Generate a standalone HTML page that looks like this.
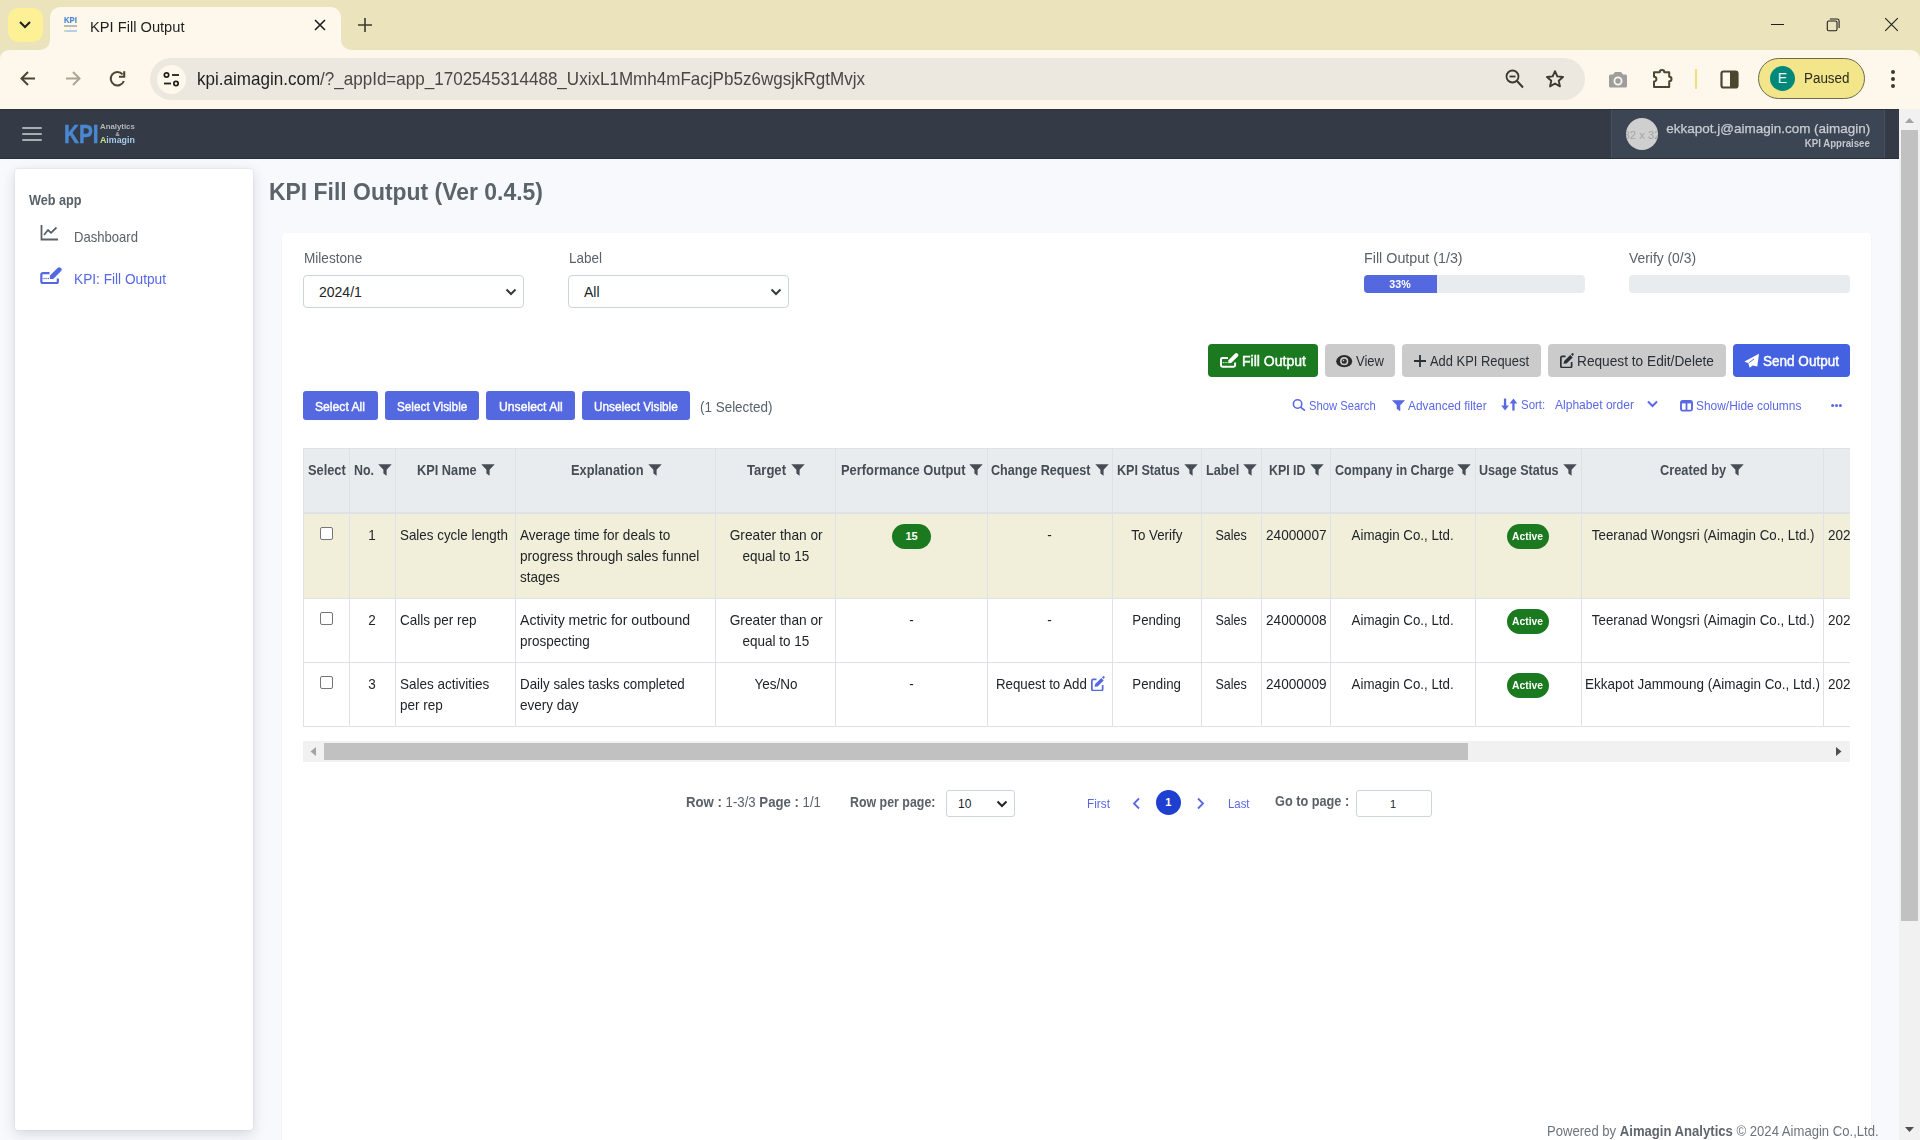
<!DOCTYPE html>
<html><head><meta charset="utf-8"><title>KPI Fill Output</title>
<style>
*{box-sizing:border-box;margin:0;padding:0}
html,body{width:1920px;height:1140px;overflow:hidden}
body{position:relative;font-family:"Liberation Sans",sans-serif;background:#f8f9fd;color:#212529}
.a{position:absolute}
.t{white-space:nowrap}
</style></head><body>
<div class="a" style="left:0px;top:0px;width:1920px;height:60px;background:#eae3bb;"></div>
<div class="a" style="left:0px;top:50px;width:1920px;height:59px;background:#fdf8eb;border-radius:9px 9px 0 0"></div>
<div class="a" style="left:50px;top:7px;width:291px;height:45px;background:#fdf8eb;border-radius:10px 10px 0 0"></div>
<div class="a" style="left:40px;top:40px;width:10px;height:10px;background:#fdf8eb"></div>
<div class="a" style="left:30px;top:30px;width:20px;height:20px;background:#eae3bb;border-radius:0 0 10px 0"></div>
<div class="a" style="left:341px;top:40px;width:10px;height:10px;background:#fdf8eb"></div>
<div class="a" style="left:341px;top:30px;width:20px;height:20px;background:#eae3bb;border-radius:0 0 0 10px"></div>
<div class="a" style="left:8px;top:8px;width:35px;height:34px;background:#fdf095;border-radius:10px"></div>
<svg class="a" style="left:18px;top:19px;" width="14" height="12" viewBox="0 0 14 12"><path d="M2 3 L7 8 L12 3" fill="none" stroke="#1f1f1f" stroke-width="2"/></svg>
<div class="a t" style="left:63.80px;top:14.91px;font-size:9.6px;line-height:10.723px;color:#4a88d2;font-weight:700;font-family:'Liberation Sans';transform:scaleX(0.8000);transform-origin:left top;-webkit-text-stroke:0.2px #4a88d2;">KPI</div>
<div class="a" style="left:64px;top:25.3px;width:12.5px;height:1.4px;background:#bdbab0;"></div>
<div class="a" style="left:69.8px;top:27.8px;width:1.2px;height:1.2px;background:#cfccc2;"></div>
<div class="a" style="left:64px;top:30px;width:12.5px;height:1.5px;background:#b4cfea;"></div>
<div class="a" style="left:64px;top:30px;width:2.4px;height:1.5px;background:#cfe39a;"></div>
<div class="a t" style="left:90.00px;top:17.86px;font-size:15.4px;line-height:17.202px;color:#1f1f1f;font-weight:400;font-family:'Liberation Sans';transform:scaleX(0.9523);transform-origin:left top;">KPI Fill Output</div>
<svg class="a" style="left:314px;top:19px;" width="12" height="12" viewBox="0 0 12 12"><path d="M1 1 L11 11 M11 1 L1 11" stroke="#1f1f1f" stroke-width="1.6"/></svg>
<svg class="a" style="left:358px;top:18px;" width="14" height="14" viewBox="0 0 14 14"><path d="M7 0 V14 M0 7 H14" stroke="#3b3a2e" stroke-width="1.6"/></svg>
<div class="a" style="left:1771px;top:24px;width:13px;height:1px;background:#1f1f1f;"></div>
<svg class="a" style="left:1826px;top:17px;" width="15" height="15" viewBox="0 0 15 15"><rect x="1.3" y="4" width="9.7" height="9.7" rx="1.4" fill="none" stroke="#1f1f1f" stroke-width="1.1"/><path d="M3.8 2 H11.2 Q13.1 2 13.1 3.9 V11" fill="none" stroke="#1f1f1f" stroke-width="1.1"/></svg>
<svg class="a" style="left:1884px;top:17px;" width="15" height="15" viewBox="0 0 15 15"><path d="M1.2 1.2 L13.8 13.8 M13.8 1.2 L1.2 13.8" stroke="#1f1f1f" stroke-width="1.1"/></svg>
<svg class="a" style="left:19px;top:70px;" width="18" height="17" viewBox="0 0 18 17"><path d="M16 8.5 H3 M9 2 L2.5 8.5 L9 15" fill="none" stroke="#4a4630" stroke-width="2"/></svg>
<svg class="a" style="left:64px;top:70px;" width="18" height="17" viewBox="0 0 18 17"><path d="M2 8.5 H15 M9 2 L15.5 8.5 L9 15" fill="none" stroke="#a9a696" stroke-width="2"/></svg>
<svg class="a" style="left:109px;top:70px;" width="18" height="18" viewBox="0 0 18 18"><path d="M14.84 11.0 A6.75 6.75 0 1 1 13.6 4.3" fill="none" stroke="#4a4630" stroke-width="2"/><path d="M15.2 1.2 V6.7 H10" fill="none" stroke="#4a4630" stroke-width="2.1"/></svg>
<div class="a" style="left:150px;top:58px;width:1435px;height:42px;background:#ece8e0;border-radius:21px"></div>
<div class="a" style="left:157px;top:65px;width:29px;height:29px;background:#fdf8eb;border-radius:50%"></div>
<svg class="a" style="left:162px;top:70px;" width="20" height="20" viewBox="0 0 20 20"><circle cx="4.5" cy="5" r="2.2" fill="none" stroke="#1f1f1f" stroke-width="1.7"/><path d="M10 5 H17" stroke="#1f1f1f" stroke-width="1.8"/><path d="M2 13.5 H9" stroke="#1f1f1f" stroke-width="1.8"/><circle cx="14" cy="13.5" r="2.2" fill="none" stroke="#1f1f1f" stroke-width="1.7"/></svg>
<div class="a t" style="left:197.00px;top:69.26px;font-size:18.5px;line-height:20.665px;color:#1f1f1f;font-weight:400;font-family:'Liberation Sans';transform:scaleX(0.9207);transform-origin:left top;">kpi.aimagin.com<span style="color:#4a4740">/?_appId=app_1702545314488_UxixL1Mmh4mFacjPb5z6wgsjkRgtMvjx</span></div>
<svg class="a" style="left:1503px;top:66px;" width="24" height="24" viewBox="0 0 24 24"><circle cx="9.5" cy="10.5" r="6" fill="none" stroke="#3b3a2e" stroke-width="1.8"/><path d="M6.5 10.5 H12.5" stroke="#3b3a2e" stroke-width="1.8"/><path d="M14 15 L20 21.5" stroke="#3b3a2e" stroke-width="2"/></svg>
<svg class="a" style="left:1544px;top:68px;" width="22" height="22" viewBox="0 0 22 22"><path d="M11.00 3.20 L13.32 8.41 L18.99 9.00 L14.75 12.82 L15.94 18.40 L11.00 15.55 L6.06 18.40 L7.25 12.82 L3.01 9.00 L8.68 8.41 Z" fill="none" stroke="#3b3a2e" stroke-width="1.9" stroke-linejoin="round"/></svg>
<svg class="a" style="left:1608px;top:71px;" width="20" height="17" viewBox="0 0 20 17"><path d="M1 5 Q1 3.5 2.5 3.5 H5 L7 1 H13 L15 3.5 H17.5 Q19 3.5 19 5 V15 Q19 16.5 17.5 16.5 H2.5 Q1 16.5 1 15 Z" fill="#9e9e9e"/><circle cx="10" cy="10" r="3.6" fill="none" stroke="#fdf8eb" stroke-width="1.8"/></svg>
<svg class="a" style="left:1652px;top:67px;" width="23" height="22" viewBox="0 0 23 22"><path d="M2 5.2 H7.7 A2.3 2.3 0 0 1 12.3 5.2 H17.2 V9.7 A2.3 2.3 0 0 1 17.2 14.3 V20 H2 V14.6 A2.4 2.4 0 0 0 2 9.8 Z" fill="none" stroke="#4a4630" stroke-width="2" stroke-linejoin="round"/></svg>
<div class="a" style="left:1695px;top:69px;width:2px;height:20px;background:#f0e07a;"></div>
<svg class="a" style="left:1720px;top:70px;" width="20" height="19" viewBox="0 0 20 19"><rect x="1.5" y="1.5" width="16" height="16" rx="2" fill="none" stroke="#4a4630" stroke-width="2.2"/><rect x="10" y="1.5" width="7.5" height="16" fill="#4a4630"/></svg>
<div class="a" style="left:1758px;top:58px;width:107px;height:41px;background:#f2e58a;border:1px solid #6e6a50;border-radius:21px"></div>
<div class="a" style="left:1770px;top:66px;width:25px;height:25px;background:#00897b;border-radius:50%"></div>
<div class="a t" style="left:1777.83px;top:70.83px;font-size:14px;line-height:15.638px;color:#e8f5f3;font-weight:400;font-family:'Liberation Sans';">E</div>
<div class="a t" style="left:1804.00px;top:70.83px;font-size:14px;line-height:15.638px;color:#2b2a1e;font-weight:400;font-family:'Liberation Sans';transform:scaleX(0.9582);transform-origin:left top;">Paused</div>
<svg class="a" style="left:1889px;top:69px;" width="8" height="20" viewBox="0 0 8 20"><circle cx="4" cy="3" r="2" fill="#3b3a2e"/><circle cx="4" cy="10" r="2" fill="#3b3a2e"/><circle cx="4" cy="17" r="2" fill="#3b3a2e"/></svg>
<div class="a" style="left:0px;top:109px;width:1899px;height:50px;background:#343a46;"></div>
<div class="a" style="left:1611px;top:109px;width:274px;height:50px;background:#3c4553;border-left:1px solid #46525f;border-right:1px solid #46525f"></div>
<div class="a" style="left:0px;top:109px;width:1899px;height:1px;background:#2b313b;"></div>
<div class="a" style="left:0px;top:158px;width:1899px;height:1px;background:#2a3039;"></div>
<div class="a" style="left:22px;top:127px;width:20px;height:2px;background:#a9adb3;border-radius:1px"></div>
<div class="a" style="left:22px;top:133px;width:20px;height:2px;background:#a9adb3;border-radius:1px"></div>
<div class="a" style="left:22px;top:139px;width:20px;height:2px;background:#a9adb3;border-radius:1px"></div>
<div class="a t" style="left:63.90px;top:120.68px;font-size:25px;line-height:27.925px;color:#4a88d2;font-weight:700;font-family:'Liberation Sans';transform:scaleX(0.8276);transform-origin:left top;-webkit-text-stroke:0.5px #4a88d2;">KPI</div>
<div class="a t" style="left:100.20px;top:123.46px;font-size:8px;line-height:8.936px;color:#b4b6ba;font-weight:700;font-family:'Liberation Sans';transform:scaleX(0.9781);transform-origin:left top;filter:blur(0.25px);">Analytics</div>
<div class="a t" style="left:115.51px;top:131.32px;font-size:5.5px;line-height:6.143px;color:#b4b6ba;font-weight:700;font-family:'Liberation Sans';">&amp;</div>
<div class="a t" style="left:100.20px;top:135.16px;font-size:9px;line-height:10.053px;color:#a6cbec;font-weight:700;font-family:'Liberation Sans';transform:scaleX(0.9799);transform-origin:left top;filter:blur(0.25px);"><span style="color:#c9e27a">A</span>imagin</div>
<div class="a" style="left:1626px;top:118px;width:32px;height:32px;background:#cfcfcf;border-radius:50%"></div>
<div class="a" style="left:1626px;top:118px;width:32px;height:32px;border-radius:50%;overflow:hidden">
<div class="a t" style="left:-2.05px;top:11.24px;font-size:11px;line-height:12.287px;color:#a4a4a4;font-weight:400;font-family:'Liberation Sans';transform:scaleX(1.0251);transform-origin:center top;">32 x 32</div>
</div>
<div class="a t" style="left:1665.70px;top:120.78px;font-size:13.5px;line-height:15.079px;color:#c9cdd3;font-weight:400;font-family:'Liberation Sans';transform:scaleX(0.9985);transform-origin:right top;-webkit-text-stroke:0.25px #c9cdd3;">ekkapot.j@aimagin.com (aimagin)</div>
<div class="a t" style="left:1797.19px;top:137.23px;font-size:10.8px;line-height:12.064px;color:#c4c8ce;font-weight:700;font-family:'Liberation Sans';transform:scaleX(0.8927);transform-origin:right top;">KPI Appraisee</div>
<div class="a" style="left:1899px;top:109px;width:21px;height:1031px;background:#f1f1f1;"></div>
<svg class="a" style="left:1904px;top:117px;" width="11" height="7" viewBox="0 0 11 7"><path d="M1 6 L5.5 1 L10 6 Z" fill="#a3a3a3"/></svg>
<div class="a" style="left:1901px;top:130px;width:17px;height:791px;background:#c1c1c1;"></div>
<svg class="a" style="left:1904px;top:1126px;" width="11" height="7" viewBox="0 0 11 7"><path d="M1 1 L5.5 6 L10 1 Z" fill="#505050"/></svg>
<div class="a" style="left:15px;top:169px;width:238px;height:961px;background:#fff;border-radius:3px;box-shadow:0 4px 14px rgba(20,30,50,.15),0 0 2px rgba(0,0,0,.13)"></div>
<div class="a t" style="left:29.00px;top:192.83px;font-size:14px;line-height:15.638px;color:#5a6169;font-weight:700;font-family:'Liberation Sans';transform:scaleX(0.9057);transform-origin:left top;">Web app</div>
<svg class="a" style="left:40px;top:224px;" width="19" height="17" viewBox="0 0 19 17"><path d="M1.5 1 V15.5 H18" fill="none" stroke="#5a6169" stroke-width="1.8"/><path d="M4 11 L8 6 L11 8.8 L16.5 3.5" fill="none" stroke="#5a6169" stroke-width="1.8" stroke-linejoin="round"/></svg>
<div class="a t" style="left:74.00px;top:228.99px;font-size:14.6px;line-height:16.308px;color:#5a6169;font-weight:400;font-family:'Liberation Sans';transform:scaleX(0.8963);transform-origin:left top;">Dashboard</div>
<svg class="a" style="left:38.629999999999995px;top:265.54999999999995px;" width="23.4" height="18.72" viewBox="-1 -5 20 16"><path d="M8 1 H2.4 Q1 1 1 2.4 V8.3 Q1 9.7 2.4 9.7 H13.7 Q15.1 9.7 15.1 8.3 V5.6" fill="none" stroke="#5468e0" stroke-width="1.9"/><path d="M8.39 3.19 L14.89 -3.31 Q16.3 -4.7 17.71 -3.31 Q19.1 -1.9 17.71 -0.49 L11.21 6.01 L8.24 6.16 Z" fill="#5468e0"/><circle cx="3.3" cy="5.6" r="0.65" fill="#5468e0"/><circle cx="5.1" cy="5.6" r="0.65" fill="#5468e0"/><circle cx="6.9" cy="5.6" r="0.65" fill="#5468e0"/></svg>
<div class="a t" style="left:74.00px;top:271.51px;font-size:13.8px;line-height:15.415px;color:#5468e6;font-weight:400;font-family:'Liberation Sans';transform:scaleX(0.9916);transform-origin:left top;">KPI: Fill Output</div>
<div class="a t" style="left:269.00px;top:179.69px;font-size:23px;line-height:25.691px;color:#5b636b;font-weight:700;font-family:'Liberation Sans';transform:scaleX(0.9972);transform-origin:left top;">KPI Fill Output (Ver 0.4.5)</div>
<div class="a" style="left:282px;top:233px;width:1589px;height:930px;background:#fff;border-radius:4px;box-shadow:0 1px 3px rgba(30,40,60,.05)"></div>
<div class="a t" style="left:303.70px;top:250.18px;font-size:14.5px;line-height:16.197px;color:#5a6169;font-weight:400;font-family:'Liberation Sans';transform:scaleX(0.9378);transform-origin:left top;">Milestone</div>
<div class="a t" style="left:568.50px;top:250.18px;font-size:14.5px;line-height:16.197px;color:#5a6169;font-weight:400;font-family:'Liberation Sans';transform:scaleX(0.9300);transform-origin:left top;">Label</div>
<div class="a" style="left:303px;top:275px;width:221px;height:33px;background:#fff;border:1px solid #ced4da;border-radius:4px"></div>
<div class="a t" style="left:319.00px;top:285.43px;font-size:14px;line-height:15.638px;color:#212529;font-weight:400;font-family:'Liberation Sans';">2024/1</div>
<svg class="a" style="left:505px;top:288px;" width="12" height="8" viewBox="0 0 12 8"><path d="M1.5 1.5 L6 6 L10.5 1.5" fill="none" stroke="#343a40" stroke-width="2"/></svg>
<div class="a" style="left:568px;top:275px;width:221px;height:33px;background:#fff;border:1px solid #ced4da;border-radius:4px"></div>
<div class="a t" style="left:584.00px;top:285.43px;font-size:14px;line-height:15.638px;color:#212529;font-weight:400;font-family:'Liberation Sans';">All</div>
<svg class="a" style="left:770px;top:288px;" width="12" height="8" viewBox="0 0 12 8"><path d="M1.5 1.5 L6 6 L10.5 1.5" fill="none" stroke="#343a40" stroke-width="2"/></svg>
<div class="a t" style="left:1364.20px;top:250.18px;font-size:14.5px;line-height:16.197px;color:#5a6169;font-weight:400;font-family:'Liberation Sans';transform:scaleX(0.9868);transform-origin:left top;">Fill Output (1/3)</div>
<div class="a t" style="left:1629.20px;top:250.18px;font-size:14.5px;line-height:16.197px;color:#5a6169;font-weight:400;font-family:'Liberation Sans';transform:scaleX(0.9556);transform-origin:left top;">Verify (0/3)</div>
<div class="a" style="left:1364px;top:275px;width:221px;height:18px;background:#e9ecef;border-radius:4px"></div>
<div class="a" style="left:1364px;top:275px;width:73px;height:18px;background:#5468e0;border-radius:4px 0 0 4px"></div>
<div class="a t" style="left:1389.38px;top:278.25px;font-size:11px;line-height:12.287px;color:#fff;font-weight:700;font-family:'Liberation Sans';transform:scaleX(0.9713);transform-origin:center top;">33%</div>
<div class="a" style="left:1629px;top:275px;width:221px;height:18px;background:#e9ecef;border-radius:4px"></div>
<div class="a" style="left:1208px;top:344px;width:110px;height:33px;background:#1b7a1f;border-radius:4px"></div>
<svg class="a" style="left:1218.6px;top:352px;" width="20.0" height="16.0" viewBox="-1 -5 20 16"><path d="M8 1 H2.4 Q1 1 1 2.4 V8.3 Q1 9.7 2.4 9.7 H13.7 Q15.1 9.7 15.1 8.3 V5.6" fill="none" stroke="#fff" stroke-width="2"/><path d="M8.39 3.19 L14.89 -3.31 Q16.3 -4.7 17.71 -3.31 Q19.1 -1.9 17.71 -0.49 L11.21 6.01 L8.24 6.16 Z" fill="#fff"/><circle cx="3.3" cy="5.6" r="0.65" fill="#fff"/><circle cx="5.1" cy="5.6" r="0.65" fill="#fff"/><circle cx="6.9" cy="5.6" r="0.65" fill="#fff"/></svg>
<div class="a t" style="left:1241.60px;top:353.08px;font-size:14.5px;line-height:16.197px;color:#fff;font-weight:400;font-family:'Liberation Sans';transform:scaleX(0.9683);transform-origin:left top;-webkit-text-stroke:0.45px #fff;">Fill Output</div>
<div class="a" style="left:1325px;top:344px;width:70px;height:33px;background:#cbcbcb;border-radius:4px"></div>
<svg class="a" style="left:1336px;top:354.5px;" width="17" height="13" viewBox="0 0 17 13"><ellipse cx="8.2" cy="6.2" rx="8" ry="6.1" fill="#2b2b2b"/><circle cx="8.2" cy="6.2" r="4.1" fill="#cbcbcb"/><circle cx="8.2" cy="6.2" r="2.5" fill="#2b2b2b"/><path d="M8.2 4.6 A1.6 1.6 0 0 0 6.6 6.2 L8.2 6.2 Z" fill="#cbcbcb"/></svg>
<div class="a t" style="left:1355.80px;top:353.73px;font-size:14px;line-height:15.638px;color:#2a2f35;font-weight:400;font-family:'Liberation Sans';transform:scaleX(0.9304);transform-origin:left top;">View</div>
<div class="a" style="left:1402px;top:344px;width:139px;height:33px;background:#cbcbcb;border-radius:4px"></div>
<svg class="a" style="left:1413px;top:354px;" width="14" height="14" viewBox="0 0 14 14"><path d="M7 1 V13 M1 7 H13" stroke="#2a2f35" stroke-width="1.8"/></svg>
<div class="a t" style="left:1430.00px;top:353.73px;font-size:14px;line-height:15.638px;color:#2a2f35;font-weight:400;font-family:'Liberation Sans';transform:scaleX(0.9217);transform-origin:left top;">Add KPI Request</div>
<div class="a" style="left:1548px;top:344px;width:178px;height:33px;background:#cbcbcb;border-radius:4px"></div>
<svg class="a" style="left:1558.5px;top:352.0px;" width="16.0" height="16.0" viewBox="-1 -3.5 16 16"><path d="M5.5 0.85 H2.3 Q0.85 0.85 0.85 2.3 V10.6 Q0.85 12.05 2.3 12.05 H10.2 Q11.65 12.05 11.65 10.6 V6.5" fill="none" stroke="#2a2f35" stroke-width="1.7"/><path d="M3.5 8.3 L4.2 5.6 L10.3 -0.5 L12.7 1.9 L6.6 8 Z" fill="#2a2f35"/><path d="M11 -1.2 L11.8 -2 Q12.6 -2.8 13.4 -2 Q14.2 -1.2 13.4 -0.4 L13.4 -0.4 L12.6 0.4 Z" fill="#2a2f35"/></svg>
<div class="a t" style="left:1577.00px;top:353.73px;font-size:14px;line-height:15.638px;color:#2a2f35;font-weight:400;font-family:'Liberation Sans';transform:scaleX(0.9779);transform-origin:left top;">Request to Edit/Delete</div>
<div class="a" style="left:1733px;top:344px;width:117px;height:33px;background:#4361e0;border-radius:4px"></div>
<svg class="a" style="left:1744px;top:353px;" width="16" height="16" viewBox="0 0 16 16"><path d="M15 0.7 L0.4 8.5 L4.3 10.2 L5.7 14.8 L8.6 12.5 L13.3 13.5 Z" fill="#fff"/><path d="M4.6 10 L10 6" stroke="#4361e0" stroke-width="0.9"/></svg>
<div class="a t" style="left:1762.50px;top:353.08px;font-size:14.5px;line-height:16.197px;color:#fff;font-weight:400;font-family:'Liberation Sans';transform:scaleX(0.9334);transform-origin:left top;-webkit-text-stroke:0.45px #fff;">Send Output</div>
<div class="a" style="left:303px;top:391px;width:75px;height:29px;background:#5468e0;border-radius:3px"></div>
<div class="a t" style="left:315.40px;top:399.62px;font-size:12.8px;line-height:14.298px;color:#fff;font-weight:400;font-family:'Liberation Sans';transform:scaleX(0.9498);transform-origin:left top;-webkit-text-stroke:0.4px #fff;">Select All</div>
<div class="a" style="left:385px;top:391px;width:94px;height:29px;background:#5468e0;border-radius:3px"></div>
<div class="a t" style="left:397.00px;top:399.62px;font-size:12.8px;line-height:14.298px;color:#fff;font-weight:400;font-family:'Liberation Sans';transform:scaleX(0.9178);transform-origin:left top;-webkit-text-stroke:0.4px #fff;">Select Visible</div>
<div class="a" style="left:486px;top:391px;width:89px;height:29px;background:#5468e0;border-radius:3px"></div>
<div class="a t" style="left:498.70px;top:399.62px;font-size:12.8px;line-height:14.298px;color:#fff;font-weight:400;font-family:'Liberation Sans';transform:scaleX(0.9542);transform-origin:left top;-webkit-text-stroke:0.4px #fff;">Unselect All</div>
<div class="a" style="left:582px;top:391px;width:108px;height:29px;background:#5468e0;border-radius:3px"></div>
<div class="a t" style="left:594.00px;top:399.62px;font-size:12.8px;line-height:14.298px;color:#fff;font-weight:400;font-family:'Liberation Sans';transform:scaleX(0.9228);transform-origin:left top;-webkit-text-stroke:0.4px #fff;">Unselect Visible</div>
<div class="a t" style="left:700.30px;top:399.38px;font-size:14.5px;line-height:16.197px;color:#5a6169;font-weight:400;font-family:'Liberation Sans';transform:scaleX(0.9273);transform-origin:left top;">(1 Selected)</div>
<svg class="a" style="left:1292px;top:399.3px;" width="14" height="13" viewBox="0 0 14 13"><circle cx="5.6" cy="5" r="4.2" fill="none" stroke="#5b68e6" stroke-width="1.6"/><path d="M8.6 8.2 L13 11.6" stroke="#5b68e6" stroke-width="1.7"/></svg>
<div class="a t" style="left:1308.70px;top:398.54px;font-size:13px;line-height:14.521px;color:#5b68e6;font-weight:400;font-family:'Liberation Sans';transform:scaleX(0.8626);transform-origin:left top;">Show Search</div>
<svg class="a" style="left:1391.5px;top:400px;" width="13" height="11" viewBox="0 0 13 11"><path d="M0.5 0.5 H12.5 L8 5.3 V10.7 L5 8.8 V5.3 Z" fill="#5b68e6" stroke="#5b68e6" stroke-width="0.6" stroke-linejoin="round"/></svg>
<div class="a t" style="left:1408.00px;top:398.54px;font-size:13px;line-height:14.521px;color:#5b68e6;font-weight:400;font-family:'Liberation Sans';transform:scaleX(0.9151);transform-origin:left top;">Advanced filter</div>
<svg class="a" style="left:1501px;top:398px;" width="17" height="13" viewBox="0 0 17 13"><rect x="2.9" y="0.6" width="2.3" height="8" fill="#5b68e6"/><path d="M0.2 7.6 H7.9 L4.05 12.6 Z" fill="#5b68e6"/><rect x="11.3" y="4.4" width="2.3" height="8.2" fill="#5b68e6"/><path d="M8.6 5.4 H16.3 L12.45 0.6 Z" fill="#5b68e6"/></svg>
<div class="a t" style="left:1520.80px;top:397.94px;font-size:13px;line-height:14.521px;color:#5b68e6;font-weight:400;font-family:'Liberation Sans';transform:scaleX(0.8810);transform-origin:left top;">Sort:</div>
<div class="a t" style="left:1555.30px;top:397.94px;font-size:13px;line-height:14.521px;color:#5b68e6;font-weight:400;font-family:'Liberation Sans';transform:scaleX(0.9263);transform-origin:left top;">Alphabet order</div>
<svg class="a" style="left:1647px;top:400px;" width="11" height="8" viewBox="0 0 11 8"><path d="M1 1.5 L5.5 6 L10 1.5" fill="none" stroke="#5b68e6" stroke-width="2"/></svg>
<svg class="a" style="left:1680px;top:400px;" width="13" height="11.5" viewBox="0 0 13 11.5"><rect x="1" y="1" width="11" height="9.6" rx="1.5" fill="none" stroke="#5b68e6" stroke-width="1.9"/><rect x="1" y="1" width="11" height="2.4" fill="#5b68e6"/><path d="M6.5 1 V11" stroke="#5b68e6" stroke-width="1.8"/></svg>
<div class="a t" style="left:1695.80px;top:398.54px;font-size:13px;line-height:14.521px;color:#5b68e6;font-weight:400;font-family:'Liberation Sans';transform:scaleX(0.9174);transform-origin:left top;">Show/Hide columns</div>
<svg class="a" style="left:1831px;top:403px;" width="11" height="5" viewBox="0 0 11 5"><circle cx="1.6" cy="2.5" r="1.5" fill="#5b68e6"/><circle cx="5.5" cy="2.5" r="1.5" fill="#5b68e6"/><circle cx="9.4" cy="2.5" r="1.5" fill="#5b68e6"/></svg>
<div class="a" style="left:303px;top:448px;width:1547px;height:64px;background:#e9ecef;"></div>
<div class="a" style="left:303px;top:514px;width:1547px;height:84px;background:#f1efda;"></div>
<div class="a" style="left:303px;top:599px;width:1547px;height:63px;background:#fff;"></div>
<div class="a" style="left:303px;top:663px;width:1547px;height:63px;background:#fff;"></div>
<div class="a" style="left:303px;top:448px;width:1547px;height:1px;background:#dee2e6;"></div>
<div class="a" style="left:303px;top:512px;width:1547px;height:2px;background:#dee2e6;"></div>
<div class="a" style="left:303px;top:598px;width:1547px;height:1px;background:#dee2e6;"></div>
<div class="a" style="left:303px;top:662px;width:1547px;height:1px;background:#dee2e6;"></div>
<div class="a" style="left:303px;top:726px;width:1547px;height:1px;background:#dee2e6;"></div>
<div class="a" style="left:303px;top:448px;width:1px;height:279px;background:#dee2e6;"></div>
<div class="a" style="left:349px;top:448px;width:1px;height:279px;background:#dee2e6;"></div>
<div class="a" style="left:395px;top:448px;width:1px;height:279px;background:#dee2e6;"></div>
<div class="a" style="left:515px;top:448px;width:1px;height:279px;background:#dee2e6;"></div>
<div class="a" style="left:715px;top:448px;width:1px;height:279px;background:#dee2e6;"></div>
<div class="a" style="left:835px;top:448px;width:1px;height:279px;background:#dee2e6;"></div>
<div class="a" style="left:987px;top:448px;width:1px;height:279px;background:#dee2e6;"></div>
<div class="a" style="left:1112px;top:448px;width:1px;height:279px;background:#dee2e6;"></div>
<div class="a" style="left:1201px;top:448px;width:1px;height:279px;background:#dee2e6;"></div>
<div class="a" style="left:1261px;top:448px;width:1px;height:279px;background:#dee2e6;"></div>
<div class="a" style="left:1330px;top:448px;width:1px;height:279px;background:#dee2e6;"></div>
<div class="a" style="left:1475px;top:448px;width:1px;height:279px;background:#dee2e6;"></div>
<div class="a" style="left:1581px;top:448px;width:1px;height:279px;background:#dee2e6;"></div>
<div class="a" style="left:1823px;top:448px;width:1px;height:279px;background:#dee2e6;"></div>
<div class="a t" style="left:307.75px;top:462.83px;font-size:14px;line-height:15.638px;color:#464d55;font-weight:700;font-family:'Liberation Sans';transform:scaleX(0.9152);transform-origin:left top;">Select</div>
<div class="a t" style="left:354.00px;top:462.83px;font-size:14px;line-height:15.638px;color:#464d55;font-weight:700;font-family:'Liberation Sans';transform:scaleX(0.8864);transform-origin:left top;">No.</div>
<svg class="a" style="left:378px;top:464px;" width="14" height="12" viewBox="0 0 14 12"><path d="M0.3 0.3 H13.7 L8.6 5.8 V11.7 L5.4 9.4 V5.8 Z" fill="#464d55"/></svg>
<div class="a t" style="left:417.40px;top:462.83px;font-size:14px;line-height:15.638px;color:#464d55;font-weight:700;font-family:'Liberation Sans';transform:scaleX(0.9119);transform-origin:left top;">KPI Name</div>
<svg class="a" style="left:481px;top:464px;" width="14" height="12" viewBox="0 0 14 12"><path d="M0.3 0.3 H13.7 L8.6 5.8 V11.7 L5.4 9.4 V5.8 Z" fill="#464d55"/></svg>
<div class="a t" style="left:570.70px;top:462.83px;font-size:14px;line-height:15.638px;color:#464d55;font-weight:700;font-family:'Liberation Sans';transform:scaleX(0.9136);transform-origin:left top;">Explanation</div>
<svg class="a" style="left:648px;top:464px;" width="14" height="12" viewBox="0 0 14 12"><path d="M0.3 0.3 H13.7 L8.6 5.8 V11.7 L5.4 9.4 V5.8 Z" fill="#464d55"/></svg>
<div class="a t" style="left:747.40px;top:462.83px;font-size:14px;line-height:15.638px;color:#464d55;font-weight:700;font-family:'Liberation Sans';transform:scaleX(0.9341);transform-origin:left top;">Target</div>
<svg class="a" style="left:791px;top:464px;" width="14" height="12" viewBox="0 0 14 12"><path d="M0.3 0.3 H13.7 L8.6 5.8 V11.7 L5.4 9.4 V5.8 Z" fill="#464d55"/></svg>
<div class="a t" style="left:840.50px;top:462.83px;font-size:14px;line-height:15.638px;color:#464d55;font-weight:700;font-family:'Liberation Sans';transform:scaleX(0.9198);transform-origin:left top;">Performance Output</div>
<svg class="a" style="left:969.4px;top:464px;" width="14" height="12" viewBox="0 0 14 12"><path d="M0.3 0.3 H13.7 L8.6 5.8 V11.7 L5.4 9.4 V5.8 Z" fill="#464d55"/></svg>
<div class="a t" style="left:991.25px;top:462.83px;font-size:14px;line-height:15.638px;color:#464d55;font-weight:700;font-family:'Liberation Sans';transform:scaleX(0.8993);transform-origin:left top;">Change Request</div>
<svg class="a" style="left:1094.8px;top:464px;" width="14" height="12" viewBox="0 0 14 12"><path d="M0.3 0.3 H13.7 L8.6 5.8 V11.7 L5.4 9.4 V5.8 Z" fill="#464d55"/></svg>
<div class="a t" style="left:1116.90px;top:462.83px;font-size:14px;line-height:15.638px;color:#464d55;font-weight:700;font-family:'Liberation Sans';transform:scaleX(0.8969);transform-origin:left top;">KPI Status</div>
<svg class="a" style="left:1184px;top:464px;" width="14" height="12" viewBox="0 0 14 12"><path d="M0.3 0.3 H13.7 L8.6 5.8 V11.7 L5.4 9.4 V5.8 Z" fill="#464d55"/></svg>
<div class="a t" style="left:1206.00px;top:462.83px;font-size:14px;line-height:15.638px;color:#464d55;font-weight:700;font-family:'Liberation Sans';transform:scaleX(0.9104);transform-origin:left top;">Label</div>
<svg class="a" style="left:1243.4px;top:464px;" width="14" height="12" viewBox="0 0 14 12"><path d="M0.3 0.3 H13.7 L8.6 5.8 V11.7 L5.4 9.4 V5.8 Z" fill="#464d55"/></svg>
<div class="a t" style="left:1268.80px;top:462.83px;font-size:14px;line-height:15.638px;color:#464d55;font-weight:700;font-family:'Liberation Sans';transform:scaleX(0.8852);transform-origin:left top;">KPI ID</div>
<svg class="a" style="left:1309.6px;top:464px;" width="14" height="12" viewBox="0 0 14 12"><path d="M0.3 0.3 H13.7 L8.6 5.8 V11.7 L5.4 9.4 V5.8 Z" fill="#464d55"/></svg>
<div class="a t" style="left:1334.60px;top:462.83px;font-size:14px;line-height:15.638px;color:#464d55;font-weight:700;font-family:'Liberation Sans';transform:scaleX(0.8998);transform-origin:left top;">Company in Charge</div>
<svg class="a" style="left:1457.3px;top:464px;" width="14" height="12" viewBox="0 0 14 12"><path d="M0.3 0.3 H13.7 L8.6 5.8 V11.7 L5.4 9.4 V5.8 Z" fill="#464d55"/></svg>
<div class="a t" style="left:1479.40px;top:462.83px;font-size:14px;line-height:15.638px;color:#464d55;font-weight:700;font-family:'Liberation Sans';transform:scaleX(0.8974);transform-origin:left top;">Usage Status</div>
<svg class="a" style="left:1563px;top:464px;" width="14" height="12" viewBox="0 0 14 12"><path d="M0.3 0.3 H13.7 L8.6 5.8 V11.7 L5.4 9.4 V5.8 Z" fill="#464d55"/></svg>
<div class="a t" style="left:1660.30px;top:462.83px;font-size:14px;line-height:15.638px;color:#464d55;font-weight:700;font-family:'Liberation Sans';transform:scaleX(0.9135);transform-origin:left top;">Created by</div>
<svg class="a" style="left:1730px;top:464px;" width="14" height="12" viewBox="0 0 14 12"><path d="M0.3 0.3 H13.7 L8.6 5.8 V11.7 L5.4 9.4 V5.8 Z" fill="#464d55"/></svg>
<div class="a" style="left:320px;top:527.2px;width:13px;height:13px;background:#fff;border:1px solid #767676;border-radius:2px"></div>
<div class="a t" style="left:368.46px;top:527.38px;font-size:14.5px;line-height:16.197px;color:#212529;font-weight:400;font-family:'Liberation Sans';transform:scaleX(0.9310);transform-origin:center top;">1</div>
<div class="a" style="left:320px;top:611.7px;width:13px;height:13px;background:#fff;border:1px solid #767676;border-radius:2px"></div>
<div class="a t" style="left:368.46px;top:611.88px;font-size:14.5px;line-height:16.197px;color:#212529;font-weight:400;font-family:'Liberation Sans';transform:scaleX(0.9310);transform-origin:center top;">2</div>
<div class="a" style="left:320px;top:675.7px;width:13px;height:13px;background:#fff;border:1px solid #767676;border-radius:2px"></div>
<div class="a t" style="left:368.46px;top:675.88px;font-size:14.5px;line-height:16.197px;color:#212529;font-weight:400;font-family:'Liberation Sans';transform:scaleX(0.9310);transform-origin:center top;">3</div>
<div class="a t" style="left:400.20px;top:527.38px;font-size:14.5px;line-height:16.197px;color:#212529;font-weight:400;font-family:'Liberation Sans';transform:scaleX(0.9232);transform-origin:left top;">Sales cycle length</div>
<div class="a t" style="left:400.20px;top:611.88px;font-size:14.5px;line-height:16.197px;color:#212529;font-weight:400;font-family:'Liberation Sans';transform:scaleX(0.9310);transform-origin:left top;">Calls per rep</div>
<div class="a t" style="left:400.20px;top:675.88px;font-size:14.5px;line-height:16.197px;color:#212529;font-weight:400;font-family:'Liberation Sans';transform:scaleX(0.9310);transform-origin:left top;">Sales activities</div>
<div class="a t" style="left:400.20px;top:696.88px;font-size:14.5px;line-height:16.197px;color:#212529;font-weight:400;font-family:'Liberation Sans';transform:scaleX(0.9310);transform-origin:left top;">per rep</div>
<div class="a t" style="left:520.20px;top:527.38px;font-size:14.5px;line-height:16.197px;color:#212529;font-weight:400;font-family:'Liberation Sans';transform:scaleX(0.9339);transform-origin:left top;">Average time for deals to</div>
<div class="a t" style="left:520.20px;top:548.38px;font-size:14.5px;line-height:16.197px;color:#212529;font-weight:400;font-family:'Liberation Sans';transform:scaleX(0.9385);transform-origin:left top;">progress through sales funnel</div>
<div class="a t" style="left:520.20px;top:569.38px;font-size:14.5px;line-height:16.197px;color:#212529;font-weight:400;font-family:'Liberation Sans';transform:scaleX(0.9310);transform-origin:left top;">stages</div>
<div class="a t" style="left:520.20px;top:611.88px;font-size:14.5px;line-height:16.197px;color:#212529;font-weight:400;font-family:'Liberation Sans';transform:scaleX(0.9732);transform-origin:left top;">Activity metric for outbound</div>
<div class="a t" style="left:520.20px;top:632.88px;font-size:14.5px;line-height:16.197px;color:#212529;font-weight:400;font-family:'Liberation Sans';transform:scaleX(0.9310);transform-origin:left top;">prospecting</div>
<div class="a t" style="left:520.20px;top:675.88px;font-size:14.5px;line-height:16.197px;color:#212529;font-weight:400;font-family:'Liberation Sans';transform:scaleX(0.9211);transform-origin:left top;">Daily sales tasks completed</div>
<div class="a t" style="left:520.20px;top:696.88px;font-size:14.5px;line-height:16.197px;color:#212529;font-weight:400;font-family:'Liberation Sans';transform:scaleX(0.9310);transform-origin:left top;">every day</div>
<div class="a t" style="left:726.64px;top:527.38px;font-size:14.5px;line-height:16.197px;color:#212529;font-weight:400;font-family:'Liberation Sans';transform:scaleX(0.9458);transform-origin:center top;">Greater than or</div>
<div class="a t" style="left:739.92px;top:548.38px;font-size:14.5px;line-height:16.197px;color:#212529;font-weight:400;font-family:'Liberation Sans';transform:scaleX(0.9310);transform-origin:center top;">equal to 15</div>
<div class="a t" style="left:726.64px;top:611.88px;font-size:14.5px;line-height:16.197px;color:#212529;font-weight:400;font-family:'Liberation Sans';transform:scaleX(0.9458);transform-origin:center top;">Greater than or</div>
<div class="a t" style="left:739.92px;top:632.88px;font-size:14.5px;line-height:16.197px;color:#212529;font-weight:400;font-family:'Liberation Sans';transform:scaleX(0.9310);transform-origin:center top;">equal to 15</div>
<div class="a t" style="left:752.69px;top:675.88px;font-size:14.5px;line-height:16.197px;color:#212529;font-weight:400;font-family:'Liberation Sans';transform:scaleX(0.9310);transform-origin:center top;">Yes/No</div>
<div class="a" style="left:892px;top:524px;width:39px;height:25px;background:#1b7a1f;border-radius:12.5px"></div>
<div class="a t" style="left:905.38px;top:530.25px;font-size:11px;line-height:12.287px;color:#fff;font-weight:700;font-family:'Liberation Sans';">15</div>
<div class="a t" style="left:909.08px;top:611.88px;font-size:14.5px;line-height:16.197px;color:#212529;font-weight:400;font-family:'Liberation Sans';transform:scaleX(0.9310);transform-origin:center top;">-</div>
<div class="a t" style="left:909.08px;top:675.88px;font-size:14.5px;line-height:16.197px;color:#212529;font-weight:400;font-family:'Liberation Sans';transform:scaleX(0.9310);transform-origin:center top;">-</div>
<div class="a t" style="left:1047.08px;top:527.38px;font-size:14.5px;line-height:16.197px;color:#212529;font-weight:400;font-family:'Liberation Sans';transform:scaleX(0.9310);transform-origin:center top;">-</div>
<div class="a t" style="left:1047.08px;top:611.88px;font-size:14.5px;line-height:16.197px;color:#212529;font-weight:400;font-family:'Liberation Sans';transform:scaleX(0.9310);transform-origin:center top;">-</div>
<div class="a t" style="left:995.60px;top:675.88px;font-size:14.5px;line-height:16.197px;color:#212529;font-weight:400;font-family:'Liberation Sans';transform:scaleX(0.9156);transform-origin:left top;">Request to Add</div>
<svg class="a" style="left:1089.5px;top:674.8px;" width="16.0" height="16.0" viewBox="-1 -3.5 16 16"><path d="M5.5 0.85 H2.3 Q0.85 0.85 0.85 2.3 V10.6 Q0.85 12.05 2.3 12.05 H10.2 Q11.65 12.05 11.65 10.6 V6.5" fill="none" stroke="#5468e0" stroke-width="1.7"/><path d="M3.5 8.3 L4.2 5.6 L10.3 -0.5 L12.7 1.9 L6.6 8 Z" fill="#5468e0"/><path d="M11 -1.2 L11.8 -2 Q12.6 -2.8 13.4 -2 Q14.2 -1.2 13.4 -0.4 L13.4 -0.4 L12.6 0.4 Z" fill="#5468e0"/></svg>
<div class="a t" style="left:1129.20px;top:527.38px;font-size:14.5px;line-height:16.197px;color:#212529;font-weight:400;font-family:'Liberation Sans';transform:scaleX(0.9207);transform-origin:center top;">To Verify</div>
<div class="a t" style="left:1130.39px;top:611.88px;font-size:14.5px;line-height:16.197px;color:#212529;font-weight:400;font-family:'Liberation Sans';transform:scaleX(0.9132);transform-origin:center top;">Pending</div>
<div class="a t" style="left:1130.39px;top:675.88px;font-size:14.5px;line-height:16.197px;color:#212529;font-weight:400;font-family:'Liberation Sans';transform:scaleX(0.9132);transform-origin:center top;">Pending</div>
<div class="a t" style="left:1213.16px;top:527.38px;font-size:14.5px;line-height:16.197px;color:#212529;font-weight:400;font-family:'Liberation Sans';transform:scaleX(0.8627);transform-origin:center top;">Sales</div>
<div class="a t" style="left:1213.16px;top:611.88px;font-size:14.5px;line-height:16.197px;color:#212529;font-weight:400;font-family:'Liberation Sans';transform:scaleX(0.8627);transform-origin:center top;">Sales</div>
<div class="a t" style="left:1213.16px;top:675.88px;font-size:14.5px;line-height:16.197px;color:#212529;font-weight:400;font-family:'Liberation Sans';transform:scaleX(0.8627);transform-origin:center top;">Sales</div>
<div class="a t" style="left:1263.54px;top:527.38px;font-size:14.5px;line-height:16.197px;color:#212529;font-weight:400;font-family:'Liberation Sans';transform:scaleX(0.9378);transform-origin:center top;">24000007</div>
<div class="a t" style="left:1347.38px;top:527.38px;font-size:14.5px;line-height:16.197px;color:#212529;font-weight:400;font-family:'Liberation Sans';transform:scaleX(0.9170);transform-origin:center top;">Aimagin Co., Ltd.</div>
<div class="a t" style="left:1263.54px;top:611.88px;font-size:14.5px;line-height:16.197px;color:#212529;font-weight:400;font-family:'Liberation Sans';transform:scaleX(0.9378);transform-origin:center top;">24000008</div>
<div class="a t" style="left:1347.38px;top:611.88px;font-size:14.5px;line-height:16.197px;color:#212529;font-weight:400;font-family:'Liberation Sans';transform:scaleX(0.9170);transform-origin:center top;">Aimagin Co., Ltd.</div>
<div class="a t" style="left:1263.54px;top:675.88px;font-size:14.5px;line-height:16.197px;color:#212529;font-weight:400;font-family:'Liberation Sans';transform:scaleX(0.9378);transform-origin:center top;">24000009</div>
<div class="a t" style="left:1347.38px;top:675.88px;font-size:14.5px;line-height:16.197px;color:#212529;font-weight:400;font-family:'Liberation Sans';transform:scaleX(0.9170);transform-origin:center top;">Aimagin Co., Ltd.</div>
<div class="a" style="left:1507px;top:524px;width:42px;height:25px;background:#1b7a1f;border-radius:12.5px"></div>
<div class="a t" style="left:1511.48px;top:530.34px;font-size:11px;line-height:12.287px;color:#fff;font-weight:700;font-family:'Liberation Sans';transform:scaleX(0.9385);transform-origin:center top;">Active</div>
<div class="a" style="left:1507px;top:609px;width:42px;height:25px;background:#1b7a1f;border-radius:12.5px"></div>
<div class="a t" style="left:1511.48px;top:615.34px;font-size:11px;line-height:12.287px;color:#fff;font-weight:700;font-family:'Liberation Sans';transform:scaleX(0.9385);transform-origin:center top;">Active</div>
<div class="a" style="left:1507px;top:673px;width:42px;height:25px;background:#1b7a1f;border-radius:12.5px"></div>
<div class="a t" style="left:1511.48px;top:679.34px;font-size:11px;line-height:12.287px;color:#fff;font-weight:700;font-family:'Liberation Sans';transform:scaleX(0.9385);transform-origin:center top;">Active</div>
<div class="a t" style="left:1581.84px;top:527.38px;font-size:14.5px;line-height:16.197px;color:#212529;font-weight:400;font-family:'Liberation Sans';transform:scaleX(0.9190);transform-origin:center top;">Teeranad Wongsri (Aimagin Co., Ltd.)</div>
<div class="a t" style="left:1581.84px;top:611.88px;font-size:14.5px;line-height:16.197px;color:#212529;font-weight:400;font-family:'Liberation Sans';transform:scaleX(0.9190);transform-origin:center top;">Teeranad Wongsri (Aimagin Co., Ltd.)</div>
<div class="a t" style="left:1575.97px;top:675.88px;font-size:14.5px;line-height:16.197px;color:#212529;font-weight:400;font-family:'Liberation Sans';transform:scaleX(0.9286);transform-origin:center top;">Ekkapot Jammoung (Aimagin Co., Ltd.)</div>
<div class="a" style="left:1824px;top:500px;width:26px;height:240px;overflow:hidden">
<div class="a t" style="left:3.70px;top:27.38px;font-size:14.5px;line-height:16.197px;color:#212529;font-weight:400;font-family:'Liberation Sans';transform:scaleX(0.9310);transform-origin:left top;">2024-01-01</div>
<div class="a t" style="left:3.70px;top:111.88px;font-size:14.5px;line-height:16.197px;color:#212529;font-weight:400;font-family:'Liberation Sans';transform:scaleX(0.9310);transform-origin:left top;">2024-01-01</div>
<div class="a t" style="left:3.70px;top:175.88px;font-size:14.5px;line-height:16.197px;color:#212529;font-weight:400;font-family:'Liberation Sans';transform:scaleX(0.9310);transform-origin:left top;">2024-01-01</div>
</div>
<div class="a" style="left:303px;top:741px;width:1547px;height:21px;background:#f1f1f1;"></div>
<div class="a" style="left:324px;top:743px;width:1144px;height:17px;background:#c1c1c1;"></div>
<svg class="a" style="left:309px;top:746px;" width="8" height="11" viewBox="0 0 8 11"><path d="M7 1 L1.5 5.5 L7 10 Z" fill="#a3a3a3"/></svg>
<svg class="a" style="left:1835px;top:746px;" width="8" height="11" viewBox="0 0 8 11"><path d="M1 1 L6.5 5.5 L1 10 Z" fill="#505050"/></svg>
<div class="a t" style="left:686.00px;top:795.31px;font-size:13.8px;line-height:15.415px;color:#5a6169;font-weight:400;font-family:'Liberation Sans';transform:scaleX(0.9563);transform-origin:left top;"><b>Row :</b> 1-3/3 <b>Page :</b> 1/1</div>
<div class="a t" style="left:849.60px;top:795.31px;font-size:13.8px;line-height:15.415px;color:#5a6169;font-weight:700;font-family:'Liberation Sans';transform:scaleX(0.8984);transform-origin:left top;">Row per page:</div>
<div class="a" style="left:946px;top:790px;width:69px;height:27px;background:#fff;border:1px solid #ced4da;border-radius:3px"></div>
<div class="a t" style="left:958.00px;top:798.44px;font-size:12px;line-height:13.404px;color:#212529;font-weight:400;font-family:'Liberation Sans';">10</div>
<svg class="a" style="left:996px;top:800px;" width="12" height="8" viewBox="0 0 12 8"><path d="M1.5 1.5 L6 6 L10.5 1.5" fill="none" stroke="#212529" stroke-width="2"/></svg>
<div class="a t" style="left:1087.00px;top:797.99px;font-size:12.5px;line-height:13.963px;color:#5a67e0;font-weight:400;font-family:'Liberation Sans';transform:scaleX(0.9460);transform-origin:left top;">First</div>
<svg class="a" style="left:1132px;top:796.7px;" width="9" height="13" viewBox="0 0 9 13"><path d="M7 1.5 L2 6.5 L7 11.5" fill="none" stroke="#5a67e0" stroke-width="1.8"/></svg>
<div class="a" style="left:1155.5px;top:790px;width:25px;height:25px;background:#1f3fd1;border-radius:50%"></div>
<div class="a t" style="left:1165.24px;top:796.34px;font-size:11px;line-height:12.287px;color:#fff;font-weight:700;font-family:'Liberation Sans';">1</div>
<svg class="a" style="left:1196px;top:796.7px;" width="9" height="13" viewBox="0 0 9 13"><path d="M2 1.5 L7 6.5 L2 11.5" fill="none" stroke="#5a67e0" stroke-width="1.8"/></svg>
<div class="a t" style="left:1227.50px;top:797.99px;font-size:12.5px;line-height:13.963px;color:#5a67e0;font-weight:400;font-family:'Liberation Sans';transform:scaleX(0.9095);transform-origin:left top;">Last</div>
<div class="a t" style="left:1275.40px;top:794.01px;font-size:13.8px;line-height:15.415px;color:#5a6169;font-weight:700;font-family:'Liberation Sans';transform:scaleX(0.9219);transform-origin:left top;">Go to page :</div>
<div class="a" style="left:1356px;top:790px;width:76px;height:27px;background:#fff;border:1px solid #ced4da;border-radius:3px"></div>
<div class="a t" style="left:1389.94px;top:798.04px;font-size:11px;line-height:12.287px;color:#212529;font-weight:400;font-family:'Liberation Sans';">1</div>
<div class="a t" style="left:1546.70px;top:1123.56px;font-size:14.3px;line-height:15.973px;color:#6c757d;font-weight:400;font-family:'Liberation Sans';transform:scaleX(0.9160);transform-origin:left top;">Powered by <b style="color:#5f666d">Aimagin Analytics</b> &copy; 2024 Aimagin Co.,Ltd.</div></body></html>
